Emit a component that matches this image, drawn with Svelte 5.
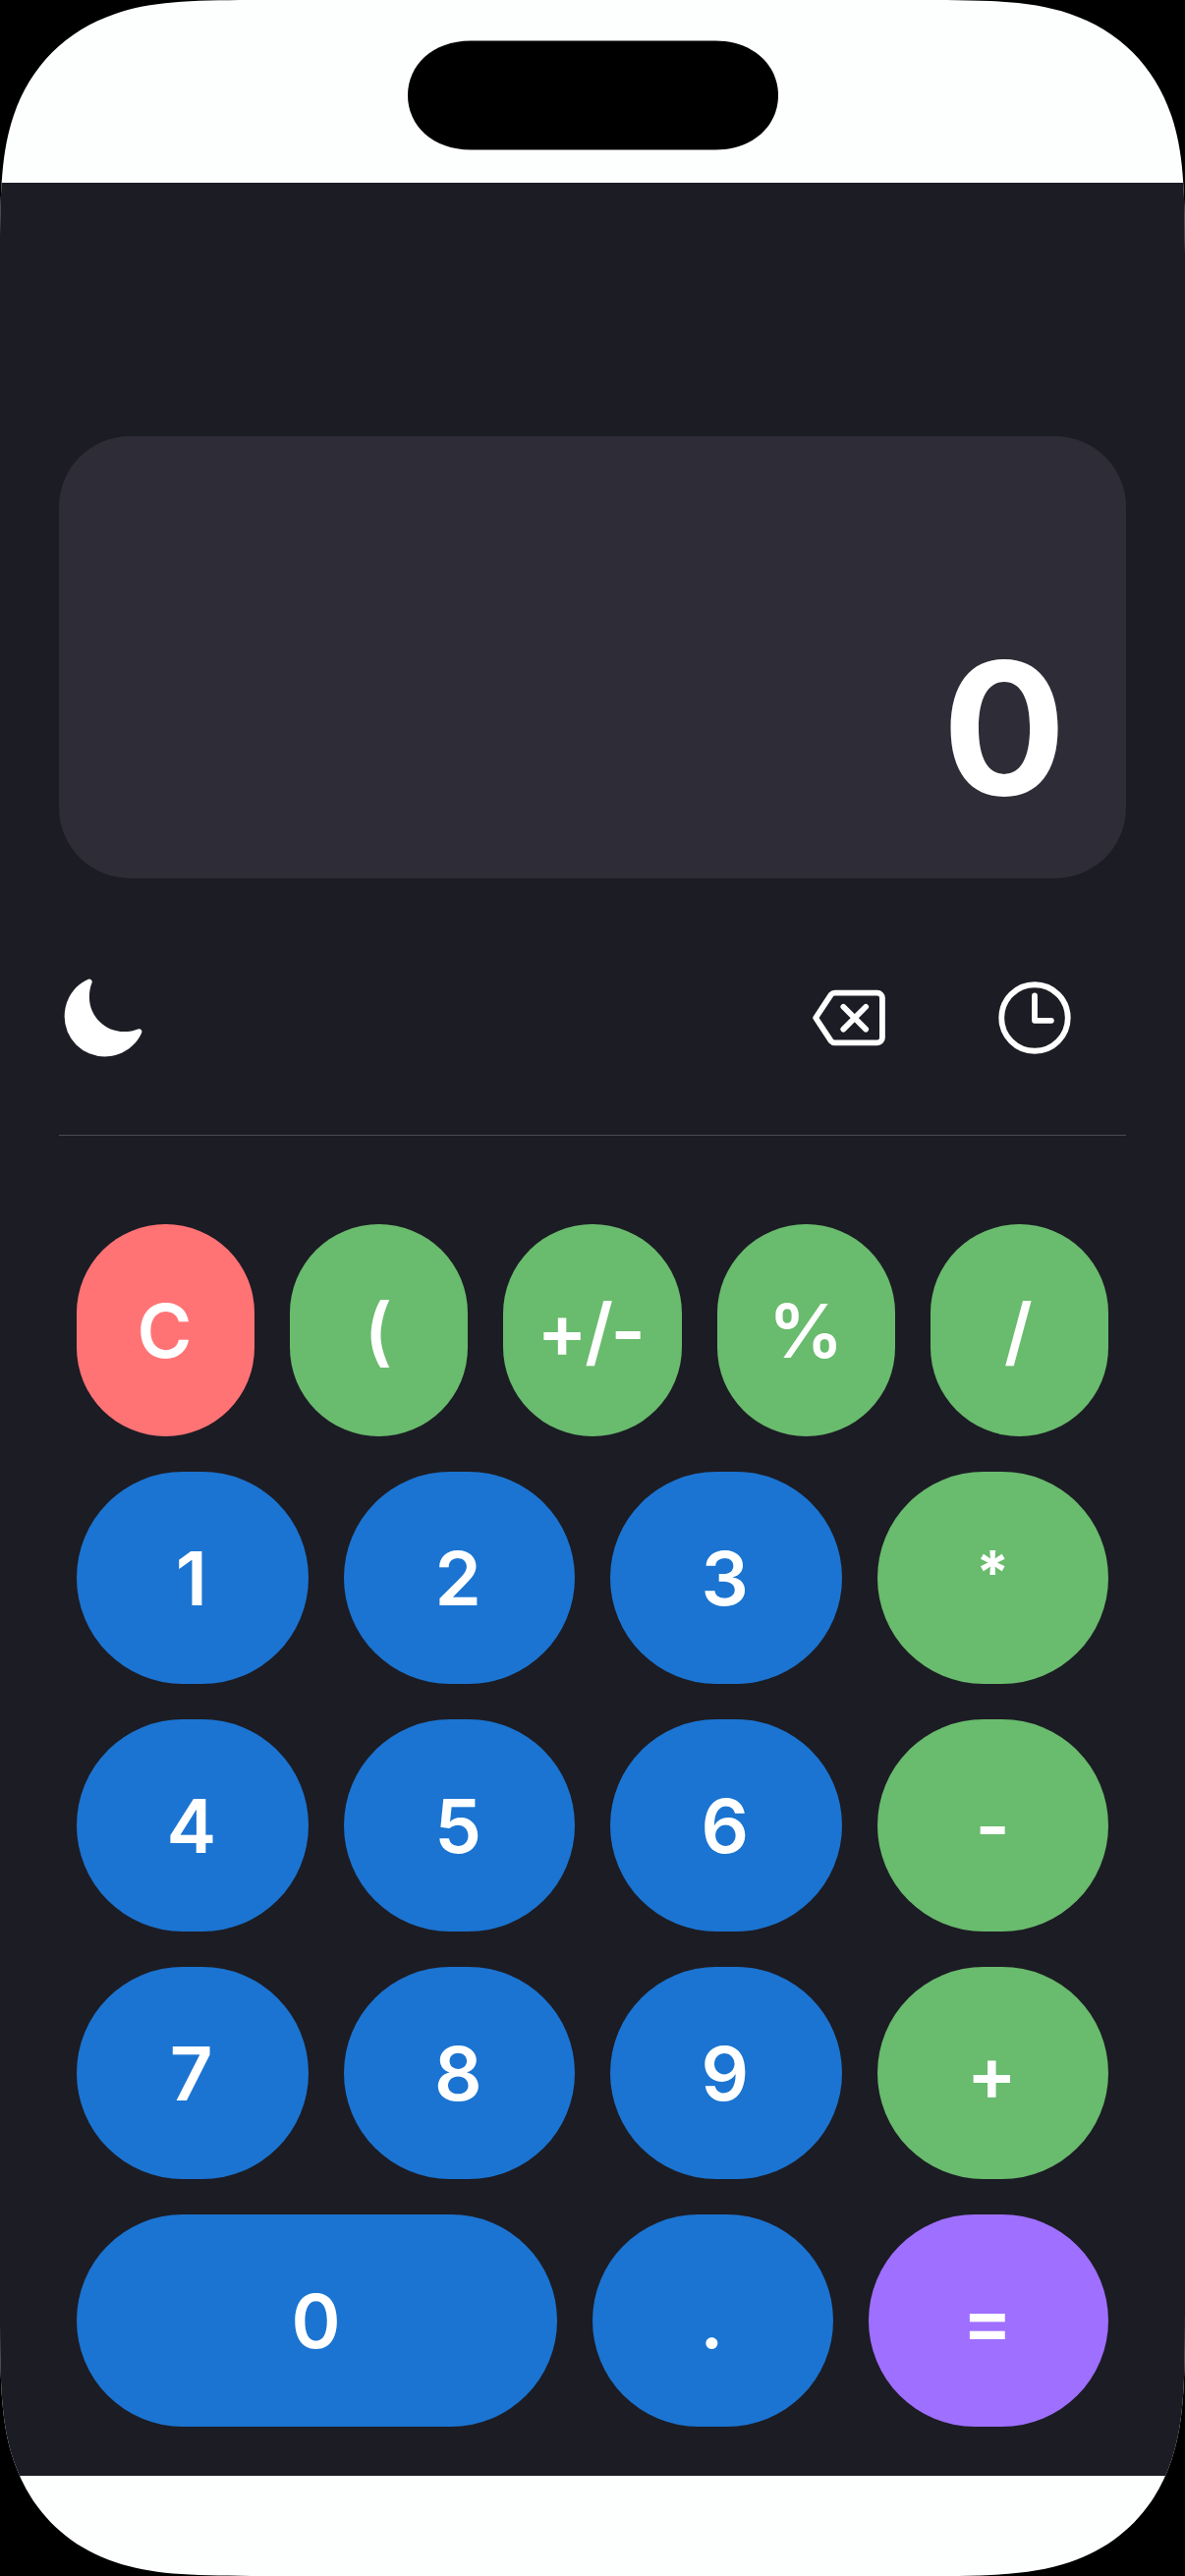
<script>
  let display = $state('0');

  const rows = [
    [
      { label: 'C', kind: 'clear' },
      { label: '(', kind: 'op' },
      { label: '+/-', kind: 'op sign' },
      { label: '%', kind: 'op centered' },
      { label: '/', kind: 'op' }
    ],
    [
      { label: '1', kind: 'num' },
      { label: '2', kind: 'num' },
      { label: '3', kind: 'num' },
      { label: '*', kind: 'op star centered' }
    ],
    [
      { label: '4', kind: 'num' },
      { label: '5', kind: 'num' },
      { label: '6', kind: 'num' },
      { label: '-', kind: 'op centered' }
    ],
    [
      { label: '7', kind: 'num' },
      { label: '8', kind: 'num' },
      { label: '9', kind: 'num' },
      { label: '+', kind: 'op' }
    ],
    [
      { label: '0', kind: 'num wide' },
      { label: '.', kind: 'num' },
      { label: '=', kind: 'equals' }
    ]
  ];

  function press(label) {
    if (label === 'C') display = '0';
    else if (/^[0-9]$/.test(label)) display = display === '0' ? label : display + label;
    else if (label === '.' && !display.includes('.')) display += '.';
  }

  function backspace() {
    display = display.length > 1 ? display.slice(0, -1) : '0';
  }
</script>

<div class="screen">
  <header class="status">
    <svg class="island" viewBox="0 -0.5 377 112" aria-hidden="true">
      <path d="M64 0H313C352 0 377 25 377 55.5S352 111 313 111H64C25 111 0 86 0 55.5S25 0 64 0Z" />
    </svg>
  </header>

  <main class="app">
    <section class="display">{display}</section>

    <div class="toolbar">
      <button class="icon" aria-label="Theme">
        <svg viewBox="0 0 512 512">
          <path fill="currentColor" d="M264 480A232 232 0 0 1 32 248c0-94 54-178.28 137.61-214.67a16 16 0 0 1 21.06 21.06C181.07 76.43 176 104.66 176 136c0 110.28 89.72 200 200 200 31.34 0 59.57-5.07 81.61-14.67a16 16 0 0 1 21.06 21.06C442.28 426 358 480 264 480z" />
        </svg>
      </button>
      <div class="tools">
        <button class="icon" aria-label="Backspace" onclick={backspace}>
          <svg class="line" viewBox="0 0 512 512">
            <path d="M135.19 390.14a28.79 28.79 0 0 0 21.68 9.86h246.26A29 29 0 0 0 432 371.13V140.87A29 29 0 0 0 403.13 112H156.87a28.84 28.84 0 0 0-21.67 9.84L46.33 256z" />
            <path d="M336.67 192.33L206.66 322.34M336.67 322.34L206.66 192.33" />
          </svg>
        </button>
        <button class="icon" aria-label="History">
          <svg class="line" viewBox="0 0 512 512">
            <circle cx="256" cy="256" r="192" />
            <path d="M256 128v144h96" />
          </svg>
        </button>
      </div>
    </div>

    <section class="keypad">
      {#each rows as row}
        <div class="row">
          {#each row as key}
            <button class="key {key.kind}" onclick={() => press(key.label)}><span>{key.label}</span></button>
          {/each}
        </div>
      {/each}
    </section>
  </main>
</div>

<style>
  :global(body) {
    margin: 0;
    background: #000;
  }

  .screen {
    width: 1206px;
    height: 2622px;
    display: flex;
    flex-direction: column;
    background: #fdfefe;
    font-family: Inter, 'Liberation Sans', sans-serif;
    color: #fff;
    clip-path: path('M284.3 0H921.7C1003.5 0 1047.5 0 1088.5 13.9C1139 31 1175 67 1192.1 117.5C1206 158.5 1206 202.5 1206 284.3V2337.7C1206 2419.5 1206 2463.5 1192.1 2504.5C1175 2555 1139 2591 1088.5 2608.1C1047.5 2622 1003.5 2622 921.7 2622H284.3C202.5 2622 158.5 2622 117.5 2608.1C67 2591 31 2555 13.9 2504.5C0 2463.5 0 2419.5 0 2337.7V284.3C0 202.5 0 158.5 13.9 117.5C31 67 67 31 117.5 13.9C158.5 0 202.5 0 284.3 0Z');
  }

  .status {
    height: 186px;
    box-sizing: border-box;
    padding-top: 41px;
    display: flex;
    justify-content: center;
    align-items: flex-start;
  }

  .island {
    width: 377px;
    height: 112px;
    display: block;
  }

  .app {
    height: 2334px;
    box-sizing: border-box;
    padding: 258px 60px 0;
    background: #1c1c24;
  }

  .display {
    height: 450px;
    box-sizing: border-box;
    padding: 0 61px 40px;
    border-radius: 72px;
    background: #2e2c36;
    display: flex;
    justify-content: flex-end;
    align-items: flex-end;
    font-size: 187px;
    line-height: 226px;
    font-weight: 700;
  }

  .toolbar {
    height: 262px;
    box-sizing: border-box;
    padding: 97px 48px 0 0;
    border-bottom: 1px solid #4b4a52;
    display: flex;
    justify-content: space-between;
    align-items: flex-start;
  }

  .tools {
    display: flex;
    gap: 96px;
  }

  button {
    margin: 0;
    padding: 0;
    border: 0;
    background: none;
    color: inherit;
    font: inherit;
  }

  .icon {
    width: 90px;
    height: 90px;
  }

  .icon svg {
    display: block;
    width: 90px;
    height: 90px;
  }

  .line {
    fill: none;
    stroke: currentColor;
    stroke-width: 33;
    stroke-linecap: round;
    stroke-linejoin: round;
  }

  .keypad {
    padding: 90px 18px 0;
    display: flex;
    flex-direction: column;
    gap: 36px;
  }

  .row {
    display: flex;
    gap: 36px;
  }

  .key {
    flex: 1 1 0;
    min-width: 0;
    height: 216px;
    border-radius: 108px;
    display: flex;
    align-items: center;
    justify-content: center;
    font-size: 76px;
    line-height: 92px;
    font-weight: 600;
  }

  .key span {
    margin-right: 2px;
  }

  .centered span {
    margin-right: 0;
  }

  .sign {
    letter-spacing: -2.4px;
  }

  .sign span {
    margin-right: 5px;
  }

  .star {
    box-sizing: border-box;
    padding-bottom: 13px;
    font-size: 61px;
    font-weight: 700;
  }

  .wide {
    flex-grow: 2;
  }

  .num {
    background: #1b74d1;
  }

  .op {
    background: #69bb6d;
  }

  .clear {
    background: #ff7375;
  }

  .equals {
    background: #9f6fff;
  }
</style>
